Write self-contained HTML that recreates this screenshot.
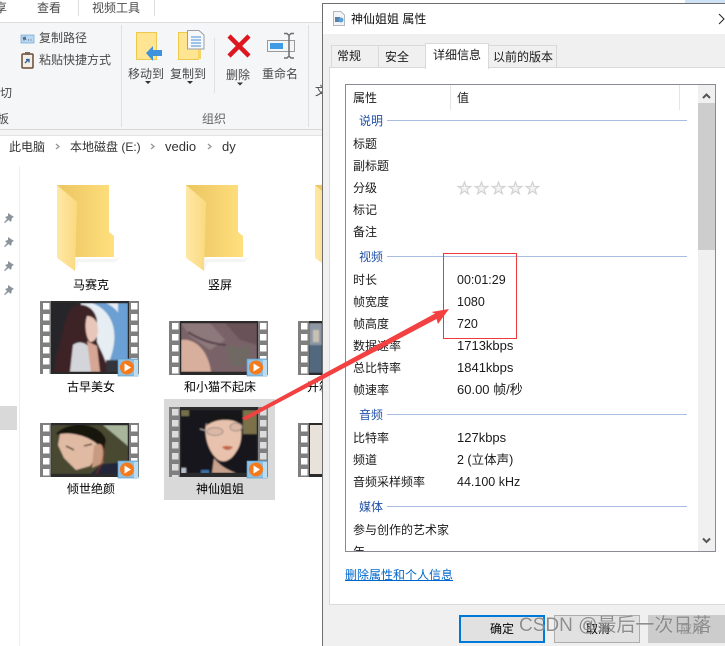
<!DOCTYPE html>
<html><head><meta charset="utf-8">
<style>
html,body{margin:0;padding:0;width:725px;height:646px;overflow:hidden;background:#fff}
body{position:relative;font:12px/16px "Liberation Sans","Noto Sans CJK SC",sans-serif;color:#1a1a1a}
.t{position:absolute;white-space:nowrap;line-height:16px;font-size:12px}
.c{transform:translateX(-50%);color:#000}
.r{color:#4a4a4a}
.g{color:#1f4fa8}
.v{font-size:12.5px}
.k{font-size:13px}
.b{position:absolute;box-sizing:border-box}
.gl{position:absolute;left:387px;width:300px;height:1px;background:#a9bde2}
#dlg{position:absolute;left:322px;top:3px;width:403px;height:643px;background:#f0f0f0;border-left:1px solid #6e6e6e;border-top:1px solid #6e6e6e;box-sizing:border-box}
</style></head>
<body>
<!-- Explorer base -->
<div class="b" style="left:0;top:22px;width:325px;height:1px;background:#dcdcdc"></div>
<div class="b" style="left:0;top:23px;width:325px;height:107px;background:#f5f6f7;border-bottom:1px solid #d8d9da"></div>
<div class="b" style="left:0;top:130px;width:325px;height:6px;background:#f4f4f4;border-bottom:1px solid #e4e4e4"></div>
<div class="b" style="left:78px;top:0;width:1px;height:16px;background:#ddd"></div>
<div class="b" style="left:154px;top:0;width:1px;height:16px;background:#ddd"></div>
<div class="b" style="left:121px;top:25px;width:1px;height:102px;background:#dfe0e1"></div>
<div class="b" style="left:214px;top:38px;width:1px;height:55px;background:#dfe0e1"></div>
<div class="b" style="left:308px;top:25px;width:1px;height:102px;background:#dfe0e1"></div>
<div class="b" style="left:19px;top:166px;width:1px;height:480px;background:#eeeeee"></div>
<div class="b" style="left:0;top:406px;width:17px;height:24px;background:#d9d9d9"></div>
<div class="b" style="left:164px;top:399px;width:111px;height:101px;background:#d9d9d9"></div>

<span class="t r" style="left:-5px;top:0">享</span>
<span class="t r" style="left:37px;top:0">查看</span>
<span class="t r" style="left:92px;top:0">视频工具</span>
<span class="t r" style="left:39px;top:30px">复制路径</span>
<span class="t r" style="left:39px;top:52px">粘贴快捷方式</span>
<span class="t r" style="left:0;top:85px">切</span>
<span class="t r" style="left:-3px;top:111px">板</span>
<span class="t r" style="left:128px;top:66px">移动到</span>
<span class="t r" style="left:170px;top:66px">复制到</span>
<span class="t r" style="left:226px;top:67px">删除</span>
<span class="t r" style="left:262px;top:66px">重命名</span>
<span class="t r" style="left:202px;top:111px;color:#666">组织</span>
<span class="t r" style="left:315px;top:83px">文</span>
<span class="t" style="left:9px;top:139px;color:#333">此电脑</span>
<span class="t" style="left:70px;top:139px;color:#333">本地磁盘 (E:)</span>
<span class="t k" style="left:165px;top:139px;color:#333">vedio</span>
<span class="t k" style="left:222px;top:139px;color:#333">dy</span>
<span class="t c" style="left:91px;top:277px">马赛克</span>
<span class="t c" style="left:220px;top:277px">竖屏</span>
<span class="t c" style="left:91px;top:379px">古早美女</span>
<span class="t c" style="left:220px;top:379px">和小猫不起床</span>
<span class="t" style="left:307px;top:379px;color:#000">开箱</span>
<span class="t c" style="left:91px;top:481px">倾世绝颜</span>
<span class="t c" style="left:220px;top:481px">神仙姐姐</span>

<svg class="b" style="left:0;top:0" width="725" height="646" viewBox="0 0 725 646">
<defs>
<linearGradient id="fb" x1="0" x2="1" y1="0" y2="0"><stop offset="0" stop-color="#ebc560"/><stop offset="1" stop-color="#ffdf7e"/></linearGradient>
<linearGradient id="ff" x1="0" x2="1" y1="0" y2="0"><stop offset="0" stop-color="#ffe8a6"/><stop offset="1" stop-color="#fad97f"/></linearGradient>
<filter id="bl" x="-10%" y="-10%" width="120%" height="120%"><feGaussianBlur stdDeviation=".7"/></filter>
<clipPath id="c1"><rect x="51" y="303" width="77" height="69"/></clipPath>
<clipPath id="c2"><rect x="181" y="323" width="76" height="49"/></clipPath>
<clipPath id="c3"><rect x="309" y="323" width="13" height="50"/></clipPath>
<clipPath id="c4"><rect x="51" y="425" width="77" height="49"/></clipPath>
<clipPath id="c5"><rect x="181" y="410" width="76" height="63"/></clipPath>
<g id="folder">
<path d="M0 0H52V47L57 51V72H0Z" fill="url(#fb)"/>
<path d="M0 0L20 17L18 86L0 73Z" fill="url(#ff)"/>
<path d="M18 74H58L64 72 58 77H22L18 86Z" fill="#eee" opacity=".6"/>
</g>
<g id="badge">
<rect x="0" y="1" width="20" height="17" fill="#8cc0e4" stroke="#5d9cc7" stroke-width=".7"/>
<rect x="16" y="2" width="4" height="16" fill="#bcdcf0"/>
<circle cx="9" cy="9.500" r="7" fill="#f47a1c"/><path d="M6.500 5.500L13 9.500 6.500 13.500Z" fill="#fff"/>
</g>
<g id="pin"><path d="M4 0L10 4 8 5 7 9 4.500 7 1 10 0 9.500 3 6 1 4 4 3Z" fill="#8b949b"/></g>
<pattern id="h" width="99" height="11" patternUnits="userSpaceOnUse"><rect x="3" y="2" width="6.500" height="6.500" fill="#fff"/><rect x="91" y="2" width="6.500" height="6.500" fill="#fff"/></pattern>
<pattern id="hs" width="99" height="11" patternUnits="userSpaceOnUse"><rect x="3" y="2" width="6.500" height="6.500" fill="#dcdcdc"/><rect x="91" y="2" width="6.500" height="6.500" fill="#dcdcdc"/></pattern>
</defs>

<!-- ribbon icons -->
<rect x="21" y="35" width="13" height="8" fill="#b8d8f2" stroke="#6fa6d6" stroke-width=".7"/><path d="M23 37l1 3 1-3 1 3M28 40h1M30.500 40h1" stroke="#335" stroke-width=".7" fill="none"/>
<rect x="22" y="54" width="11" height="14" rx="1" fill="#f3efe8" stroke="#6b4a32" stroke-width="1.500"/><rect x="25" y="52" width="5" height="3" fill="#7b6a5c"/><path d="M25 63l3-3M26 59.500h3v3" stroke="#2a5d9b" stroke-width="1.300" fill="none"/>
<rect x="136.500" y="32.500" width="20" height="27" fill="#ffe491" stroke="#eec94e"/>
<path d="M146 53L153 46V50H162V56H153V61Z" fill="#3e93dc"/>
<rect x="178.500" y="32.500" width="20" height="27" fill="#ffe491" stroke="#eec94e"/><rect x="198" y="48" width="3" height="11" fill="#f7d466"/>
<path d="M187.500 30.500H199L204 35V49H187.500Z" fill="#f6f7f9" stroke="#9aa0a6"/>
<path d="M191 37h10M191 40h10M191 43h10M191 46h10" stroke="#4a90d9"/>
<path d="M229 36L249 56M249 36L229 56" stroke="#dd1620" stroke-width="4.500"/>
<rect x="267.500" y="40.500" width="27" height="11" fill="#f4f5f6" stroke="#9a9a9a"/><rect x="270" y="43" width="13" height="6" fill="#3f9be4"/>
<path d="M284 33.500h3l2 2 2-2h3M289 35V57M284 58h3l2-2 2 2h3" stroke="#6f6f6f" stroke-width="1.500" fill="none"/>
<path d="M145 81h6l-3 3ZM187 81h6l-3 3ZM237 82.500h6l-3 3Z" fill="#333"/>
<path d="M56 144l3 2.500-3 2.500M151 144l3 2.500-3 2.500M208 144l3 2.500-3 2.500" stroke="#999" stroke-width="1.400" fill="none"/>

<use href="#pin" x="4" y="213"/><use href="#pin" x="4" y="237"/><use href="#pin" x="4" y="261"/><use href="#pin" x="4" y="285"/>
<use href="#folder" x="57" y="185"/><use href="#folder" x="186" y="185"/><use href="#folder" x="315" y="185"/>

<!-- Thumb 1 -->
<g transform="translate(40,301)"><rect width="99" height="73" fill="#7f7f7f"/><rect width="99" height="73" fill="url(#h)"/><rect x="11" width="78" height="73" fill="#2a2a2a"/></g>
<g clip-path="url(#c1)"><g filter="url(#bl)">
<rect x="51" y="303" width="77" height="69" fill="#e6edf3"/>
<rect x="51" y="303" width="30" height="69" fill="#26262c"/>
<path d="M92 303C116 312 122 340 104 372H114C134 340 126 312 106 303Z" fill="#6c9fd2"/>
<rect x="118" y="303" width="10" height="69" fill="#6aa0d6"/>
<path d="M74 306C62 318 64 335 58 350 55 360 55 366 54 372H108C106 358 100 350 97 342L97 320C95 308 84 302 74 306Z" fill="#3c2325"/>
<path d="M87 316C94 316 98 322 98 330 98 338 94 342 90 342 86 338 84 325 87 316Z" fill="#e9c6ba"/>
<path d="M73 345C78 341 84 342 88 346L92 372H70Z" fill="#d3d5da"/>
<path d="M87 341L97 346 100 372H91Z" fill="#d6a594"/>
<rect x="106" y="360" width="14" height="12" fill="#33363a"/>
</g></g>
<use href="#badge" x="118" y="358"/>

<!-- Thumb 2 -->
<g transform="translate(169,321)"><rect width="99" height="54" fill="#7f7f7f"/><rect width="99" height="54" fill="url(#h)"/><rect x="11" width="78" height="54" fill="#2a2a2a"/></g>
<g clip-path="url(#c2)"><g filter="url(#bl)">
<rect x="181" y="323" width="76" height="49" fill="#7a6367"/>
<path d="M181 323H210L225 340 210 350 190 336Z" fill="#8d787c"/>
<path d="M188 332C200 340 212 344 226 345" stroke="#54424a" stroke-width="2" fill="none"/>
<path d="M225 323H257V345L240 340Z" fill="#6a5358"/>
<path d="M181 340C195 338 208 350 211 372H181Z" fill="#d8ae9d"/>
<path d="M226 349L231 345 240 348 250 345 251 358 242 367 231 366Z" fill="#6f6863"/>
</g></g>
<use href="#badge" x="247" y="358"/>

<!-- Thumb 3 -->
<g transform="translate(298,321)"><rect width="24" height="54" fill="#7f7f7f"/><rect width="24" height="54" fill="url(#h)"/><rect x="11" width="13" height="54" fill="#2a2a2a"/></g>
<g clip-path="url(#c3)"><g filter="url(#bl)"><rect x="309" y="323" width="13" height="50" fill="#8d98a4"/><rect x="309" y="345" width="13" height="28" fill="#51677f"/><rect x="313" y="330" width="6" height="12" fill="#c9c2b4"/></g></g>

<!-- Thumb 4 -->
<g transform="translate(40,423)"><rect width="99" height="54" fill="#7f7f7f"/><rect width="99" height="54" fill="url(#h)"/><rect x="11" width="78" height="54" fill="#2a2a2a"/></g>
<g clip-path="url(#c4)"><g filter="url(#bl)">
<rect x="51" y="425" width="77" height="49" fill="#4a4a32"/>
<path d="M103 425H128V446Z" fill="#a9b69c"/>
<path d="M56 434C66 421 100 421 106 440L103 455 94 445Z" fill="#15120f"/>
<path d="M60 434C72 432 88 436 97 444L98 455 90 466 76 470 64 458 58 445Z" fill="#e0baa3"/>
<path d="M94 446C99 442 104 444 104 452L103 463 92 468Z" fill="#c89a80"/>
<path d="M66 446L74 450M84 446L92 444" stroke="#3a2a22" stroke-width="1.300"/>
<path d="M90 474L103 464 128 462V474Z" fill="#232639"/>
<path d="M102 445C106 455 102 465 96 474" stroke="#8a2a20" stroke-width=".8" fill="none"/>
</g></g>
<use href="#badge" x="118" y="460"/>

<!-- Thumb 5 selected -->
<g transform="translate(169,407)"><rect width="99" height="70" fill="#7f7f7f"/><rect width="99" height="70" fill="url(#hs)"/><rect x="11" width="78" height="70" fill="#2a2a2a"/></g>
<g clip-path="url(#c5)"><g filter="url(#bl)">
<rect x="181" y="410" width="76" height="63" fill="#15141a"/>
<rect x="181" y="410" width="8" height="6" fill="#75704a"/>
<rect x="243" y="410" width="14" height="24" fill="#7c7148"/>
<path d="M206 424C216 418 232 418 240 424 243 434 241 446 236 452 230 462 222 464 216 458 208 450 204 436 206 424Z" fill="#e8c2ac"/>
<path d="M206 426C214 420 224 418 240 422L236 414H212Z" fill="#141318"/>
<ellipse cx="215" cy="431.500" rx="8" ry="4" fill="#dcb7a4" stroke="#9a8f8c"/>
<ellipse cx="236" cy="427" rx="6" ry="4" fill="#dcb7a4" stroke="#9a8f8c"/>
<path d="M200 429L208 431" stroke="#b9b0a8"/>
<path d="M222 447C226 445 230 446 233 447 230 451 225 451 222 447Z" fill="#c4684a"/>
<path d="M214 458C220 466 228 470 236 473H212Z" fill="#c9a28e"/>
<rect x="201" y="470" width="8" height="4" fill="#3a6ea6"/>
<rect x="181" y="468" width="5" height="6" fill="#b9c3cf"/>
</g></g>
<use href="#badge" x="247" y="460"/>

<!-- Thumb 6 -->
<g transform="translate(298,423)"><rect width="24" height="54" fill="#7f7f7f"/><rect width="24" height="54" fill="url(#h)"/><rect x="11" width="13" height="54" fill="#2a2a2a"/><rect x="12" y="2" width="12" height="49" fill="#e8e2da"/></g>
</svg>

<!-- Dialog -->
<div class="b" style="left:685px;top:0;width:40px;height:3px;background:#cfe2f5"></div>
<div id="dlg"></div>
<div class="b" style="left:323px;top:4px;width:402px;height:30px;background:#fff"></div>
<svg class="b" style="left:332px;top:11px" width="14" height="16" viewBox="0 0 14 16"><path d="M1.500.5H9L12.500 4V14.500H1.500Z" fill="#f3f4f6" stroke="#b5b9bf"/><rect x="3" y="6" width="5" height="5" fill="#5a7fa8"/><circle cx="9" cy="9" r="2.500" fill="#58a3dc"/></svg>
<span class="t" style="left:351px;top:11px;color:#111">神仙姐姐 属性</span>
<svg class="b" style="left:718px;top:13px" width="7" height="12"><path d="M1 1L6 6 1 11" stroke="#222" fill="none"/></svg>

<div class="b" style="left:329px;top:67px;width:397px;height:538px;background:#fff;border:1px solid #d9d9d9"></div>
<div class="b" style="left:331px;top:45px;width:48px;height:23px;background:#f0f0f0;border:1px solid #d9d9d9"></div>
<div class="b" style="left:378px;top:45px;width:48px;height:23px;background:#f0f0f0;border:1px solid #d9d9d9"></div>
<div class="b" style="left:488px;top:45px;width:69px;height:23px;background:#f0f0f0;border:1px solid #d9d9d9"></div>
<div class="b" style="left:425px;top:43px;width:64px;height:26px;background:#fff;border:1px solid #d9d9d9;border-bottom:0"></div>
<span class="t" style="left:337px;top:48px">常规</span>
<span class="t" style="left:385px;top:49px">安全</span>
<span class="t" style="left:433px;top:47px">详细信息</span>
<span class="t" style="left:493px;top:49px">以前的版本</span>

<div class="b" style="left:345px;top:84px;width:371px;height:468px;background:#fff;border:1px solid #8a8a92;overflow:hidden"></div>
<div class="b" style="left:450px;top:85px;width:1px;height:25px;background:#e5e5e5"></div>
<div class="b" style="left:679px;top:85px;width:1px;height:25px;background:#e5e5e5"></div>
<div class="b" style="left:698px;top:85px;width:17px;height:466px;background:#f0f0f0"></div>
<div class="b" style="left:698px;top:103px;width:17px;height:147px;background:#cdcdcd"></div>
<svg class="b" style="left:698px;top:85px" width="17" height="466"><path d="M5 13L8.500 9.500 12 13M5 453.500L8.500 457 12 453.500" stroke="#555" stroke-width="2" fill="none"/></svg>

<span class="t" style="left:353px;top:90px">属性</span>
<span class="t" style="left:457px;top:90px">值</span>
<span class="t g" style="left:359px;top:113px">说明</span><div class="gl" style="top:120px"></div>
<span class="t" style="left:353px;top:136px">标题</span>
<span class="t" style="left:353px;top:158px">副标题</span>
<span class="t" style="left:353px;top:180px">分级</span>
<span class="t" style="left:353px;top:202px">标记</span>
<span class="t" style="left:353px;top:224px">备注</span>
<span class="t g" style="left:359px;top:249px">视频</span><div class="gl" style="top:256px"></div>
<span class="t" style="left:353px;top:272px">时长</span><span class="t v" style="left:457px;top:272px">00:01:29</span>
<span class="t" style="left:353px;top:294px">帧宽度</span><span class="t v" style="left:457px;top:294px">1080</span>
<span class="t" style="left:353px;top:316px">帧高度</span><span class="t v" style="left:457px;top:316px">720</span>
<span class="t" style="left:353px;top:338px">数据速率</span><span class="t k" style="left:457px;top:338px">1713kbps</span>
<span class="t" style="left:353px;top:360px">总比特率</span><span class="t k" style="left:457px;top:360px">1841kbps</span>
<span class="t" style="left:353px;top:382px">帧速率</span><span class="t k" style="left:457px;top:382px">60.00 帧/秒</span>
<span class="t g" style="left:359px;top:407px">音频</span><div class="gl" style="top:414px"></div>
<span class="t" style="left:353px;top:430px">比特率</span><span class="t k" style="left:457px;top:430px">127kbps</span>
<span class="t" style="left:353px;top:452px">频道</span><span class="t v" style="left:457px;top:452px">2 (立体声)</span>
<span class="t" style="left:353px;top:474px">音频采样频率</span><span class="t v" style="left:457px;top:474px">44.100 kHz</span>
<span class="t g" style="left:359px;top:499px">媒体</span><div class="gl" style="top:506px"></div>
<span class="t" style="left:353px;top:522px">参与创作的艺术家</span>
<div class="b" style="left:353px;top:545px;width:20px;height:6px;overflow:hidden"><span class="t" style="left:0;top:-1px">年</span></div>

<svg class="b" style="left:456px;top:179px" width="86" height="18" viewBox="0 0 86 18">
<g fill="#f4f4f4" stroke="#d2d2d2" stroke-width="1.200">
<path id="s" d="M8.500 3L10.100 7.500H14.800L11 10.300 12.400 14.800 8.500 12.100 4.600 14.800 6 10.300 2.200 7.500H6.900Z"/>
<use href="#s" x="17"/><use href="#s" x="34"/><use href="#s" x="51"/><use href="#s" x="68"/>
</g></svg>

<span class="t" style="left:345px;top:567px;color:#0066cc;text-decoration:underline">删除属性和个人信息</span>

<div class="b" style="left:459px;top:615px;width:86px;height:28px;background:#e1e1e1;border:2px solid #0078d7"></div>
<span class="t" style="left:490px;top:621px;color:#000">确定</span>
<div class="b" style="left:554px;top:615px;width:86px;height:28px;background:#e1e1e1;border:1px solid #adadad"></div>
<span class="t" style="left:586px;top:621px;color:#000">取消</span>
<div class="b" style="left:648px;top:615px;width:77px;height:28px;background:#cccccc"></div>
<span class="t" style="left:680px;top:621px;color:#8a8a8a">应用</span>

<!-- annotations -->
<svg class="b" style="left:0;top:0" width="725" height="646" viewBox="0 0 725 646">
<rect x="443.500" y="253.500" width="73" height="85" fill="none" stroke="#ee3a3a" stroke-width="1"/>
<path d="M242 418L435 313.500 431.500 312 449 309 438 324 436.500 319 245 420.500Z" fill="#f34040"/>
</svg>
<span class="t" style="left:519px;top:615px;font-size:19px;line-height:22px;color:rgba(105,105,105,.75);text-shadow:0 0 1px rgba(255,255,255,.8)">CSDN @最后一次日落</span>
</body></html>
